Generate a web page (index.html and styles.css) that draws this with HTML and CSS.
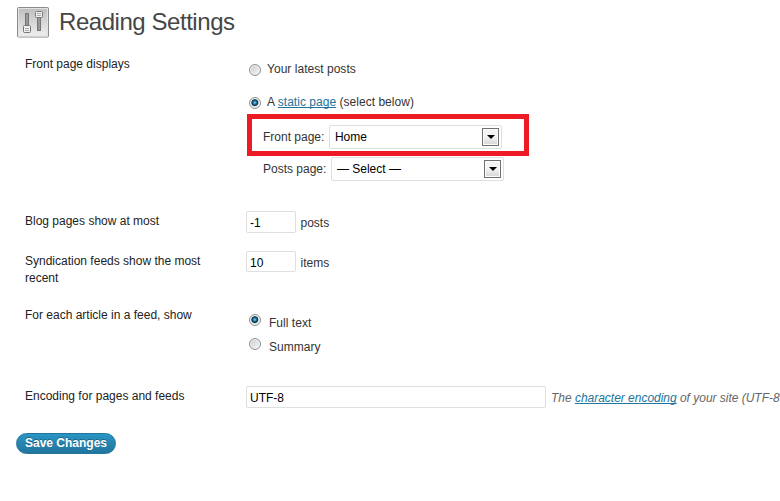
FILE: index.html
```html
<!DOCTYPE html>
<html lang="en">
<head>
<meta charset="utf-8">
<title>Reading Settings</title>
<link rel="stylesheet" href="styles.css">
</head>
<body>
<header class="header">
  <svg class="icon" width="32" height="31" viewBox="0 0 32 31">
    <defs>
      <linearGradient id="plate" x1="0" y1="0" x2="0" y2="1"><stop offset="0" stop-color="#bdbdbd"/><stop offset="1" stop-color="#f0f0f0"/></linearGradient>
    </defs>
    <rect x=".5" y=".5" width="31" height="29.5" rx="1" fill="url(#plate)" stroke="#8c8c8c"/>
    <rect x="1.5" y="1.5" width="29" height="27.5" fill="none" stroke="#e2e2e2"/>
    <rect x="8.500" y="6.500" width="3" height="15" fill="#999" stroke="#777"/>
    <rect x="20.500" y="9.500" width="3" height="14" fill="#999" stroke="#777"/>
    <rect x="6.500" y="18.500" width="7" height="7" rx="1" fill="#f1f1f1" stroke="#777"/>
    <path d="M8 21.500h4M8 23.500h4" stroke="#aaa"/>
    <rect x="18.500" y="4.500" width="7" height="6" rx="1" fill="#f1f1f1" stroke="#777"/>
    <path d="M20 6.500h4M20 8.500h4" stroke="#aaa"/>
  </svg>
  <h1 class="title">Reading Settings</h1>
</header>
<form class="form">
  <div class="row row-front">
    <div class="label">Front page displays</div>
    <div class="field">
      <label class="choice choice-first"><span class="radio"></span><span class="text">Your latest posts</span></label>
      <label class="choice choice-static"><span class="radio on"></span><span class="text">A <a class="link">static page</a> (select below)</span></label>
      <div class="pick highlight"><span class="pick-label">Front page:</span><div class="select"><span>Home</span><i class="arrow"></i></div></div>
      <div class="pick"><span class="pick-label">Posts page:</span><div class="select"><span>— Select —</span><i class="arrow"></i></div></div>
    </div>
  </div>
  <div class="row row-blog">
    <div class="label">Blog pages show at most</div>
    <div class="field inline"><div class="input small">-1</div><span>posts</span></div>
  </div>
  <div class="row row-feeds">
    <div class="label">Syndication feeds show the most recent</div>
    <div class="field inline"><div class="input small short">10</div><span>items</span></div>
  </div>
  <div class="row row-article">
    <div class="label">For each article in a feed, show</div>
    <div class="field feed">
      <label class="choice"><span class="radio on"></span><span class="text">Full text</span></label>
      <label class="choice"><span class="radio"></span><span class="text">Summary</span></label>
    </div>
  </div>
  <div class="row row-encoding">
    <div class="label">Encoding for pages and feeds</div>
    <div class="field inline"><div class="input wide">UTF-8</div><span class="hint">The <a class="link">character encoding</a> of your site (UTF-8</span></div>
  </div>
  <button class="save" type="button">Save Changes</button>
</form>
</body>
</html>
```
FILE: styles.css
```css
* { box-sizing: border-box; }
body {
  margin: 0;
  height: 501px;
  overflow: hidden;
  background: #fff;
  color: #333;
  font: 12px/17px "Liberation Sans", Arial, sans-serif;
}
.header { display: flex; height: 55px; padding: 7px 0 0 17px; }
.icon { flex: none; }
.title {
  margin: 0 0 0 10px;
  font-size: 24px;
  font-weight: 400;
  letter-spacing: -0.45px;
  line-height: 30px;
  color: #464646;
  white-space: nowrap;
}
.row { display: grid; grid-template-columns: 185px 1fr; column-gap: 36px; padding-left: 25px; }
.row-front { height: 157px; }
.row-blog { height: 40px; }
.row-feeds { height: 54px; }
.row-article { height: 81px; }
.row-encoding { height: 46px; }
.label { padding-top: 1px; color: #222; }
.field { white-space: nowrap; min-width: 0; }
.inline { display: flex; align-items: flex-start; gap: 5px; }
.inline span { padding-top: 3px; }
.row-blog .inline, .row-feeds .inline { gap: 4.5px; }
.choice { display: flex; height: 17px; gap: 6px; padding-left: 3px; }
.choice-first { margin-top: 5px; }
.choice-static { margin-top: 16px; }
.text { padding-top: 1px; letter-spacing: 0.03px; }
.radio {
  flex: none;
  width: 12px;
  height: 12px;
  margin-top: 4px;
  border: 1px solid #8e8f8f;
  border-radius: 50%;
  background: linear-gradient(135deg, #c8cbcd, #f8f8f8);
  box-shadow: inset 0 0 0 1px #f4f4f4;
}
.radio.on { background: radial-gradient(circle at 48% 46%, #8fd8f4 0, #237dab 1.5px, #102f4b 3px, #e6eaed 4px); }
.link { color: #21759b; text-decoration: underline; text-decoration-skip-ink: none; }
.pick { display: flex; height: 26px; margin: 1px 0 0 1px; padding-left: 16px; }
.pick-label { padding-top: 4px; margin-right: 5px; }
.highlight { width: 282px; height: 42px; margin-top: 4px; padding: 6px 0 0 11px; border: 5px solid #ed1c24; }
.select {
  display: flex;
  justify-content: space-between;
  width: 173px;
  height: 24px;
  padding: 2px 2px 2px 4.5px;
  border: 1px solid #dfdfdf;
  border-radius: 2px;
  color: #000;
  line-height: 18px;
}
.arrow {
  display: grid;
  place-items: center;
  width: 17px;
  height: 18px;
  border: 1px solid #707070;
  background: linear-gradient(#f3f3f3 50%, #d5d5d5);
  box-shadow: inset 0 0 0 1px #fcfcfc;
}
.arrow::before { content: ""; border: solid transparent; border-width: 4px 4px 0; border-top-color: #000; }
.input {
  height: 22px;
  margin-top: -1px;
  padding: 2px 3px;
  border: 1px solid #dfdfdf;
  border-radius: 2px;
  color: #000;
  line-height: 18px;
}
.small { width: 50px; }
.short { height: 21px; }
.wide { flex: none; width: 300px; }
.feed { padding-top: 4px; }
.feed .choice { height: 24px; gap: 8px; }
.feed .text { padding-top: 5px; }
.hint { color: #666; font-style: italic; letter-spacing: -0.02px; }
.save {
  display: block;
  width: 100px;
  height: 21px;
  margin-left: 16px;
  padding: 0;
  border: 1px solid #21759b;
  border-radius: 11px;
  background: linear-gradient(#2a95c5, #21759b);
  color: #fff;
  font: bold 12px/17px "Liberation Sans", Arial, sans-serif;
  text-shadow: 0 -1px 0 rgba(0, 0, 0, .3);
}
```
